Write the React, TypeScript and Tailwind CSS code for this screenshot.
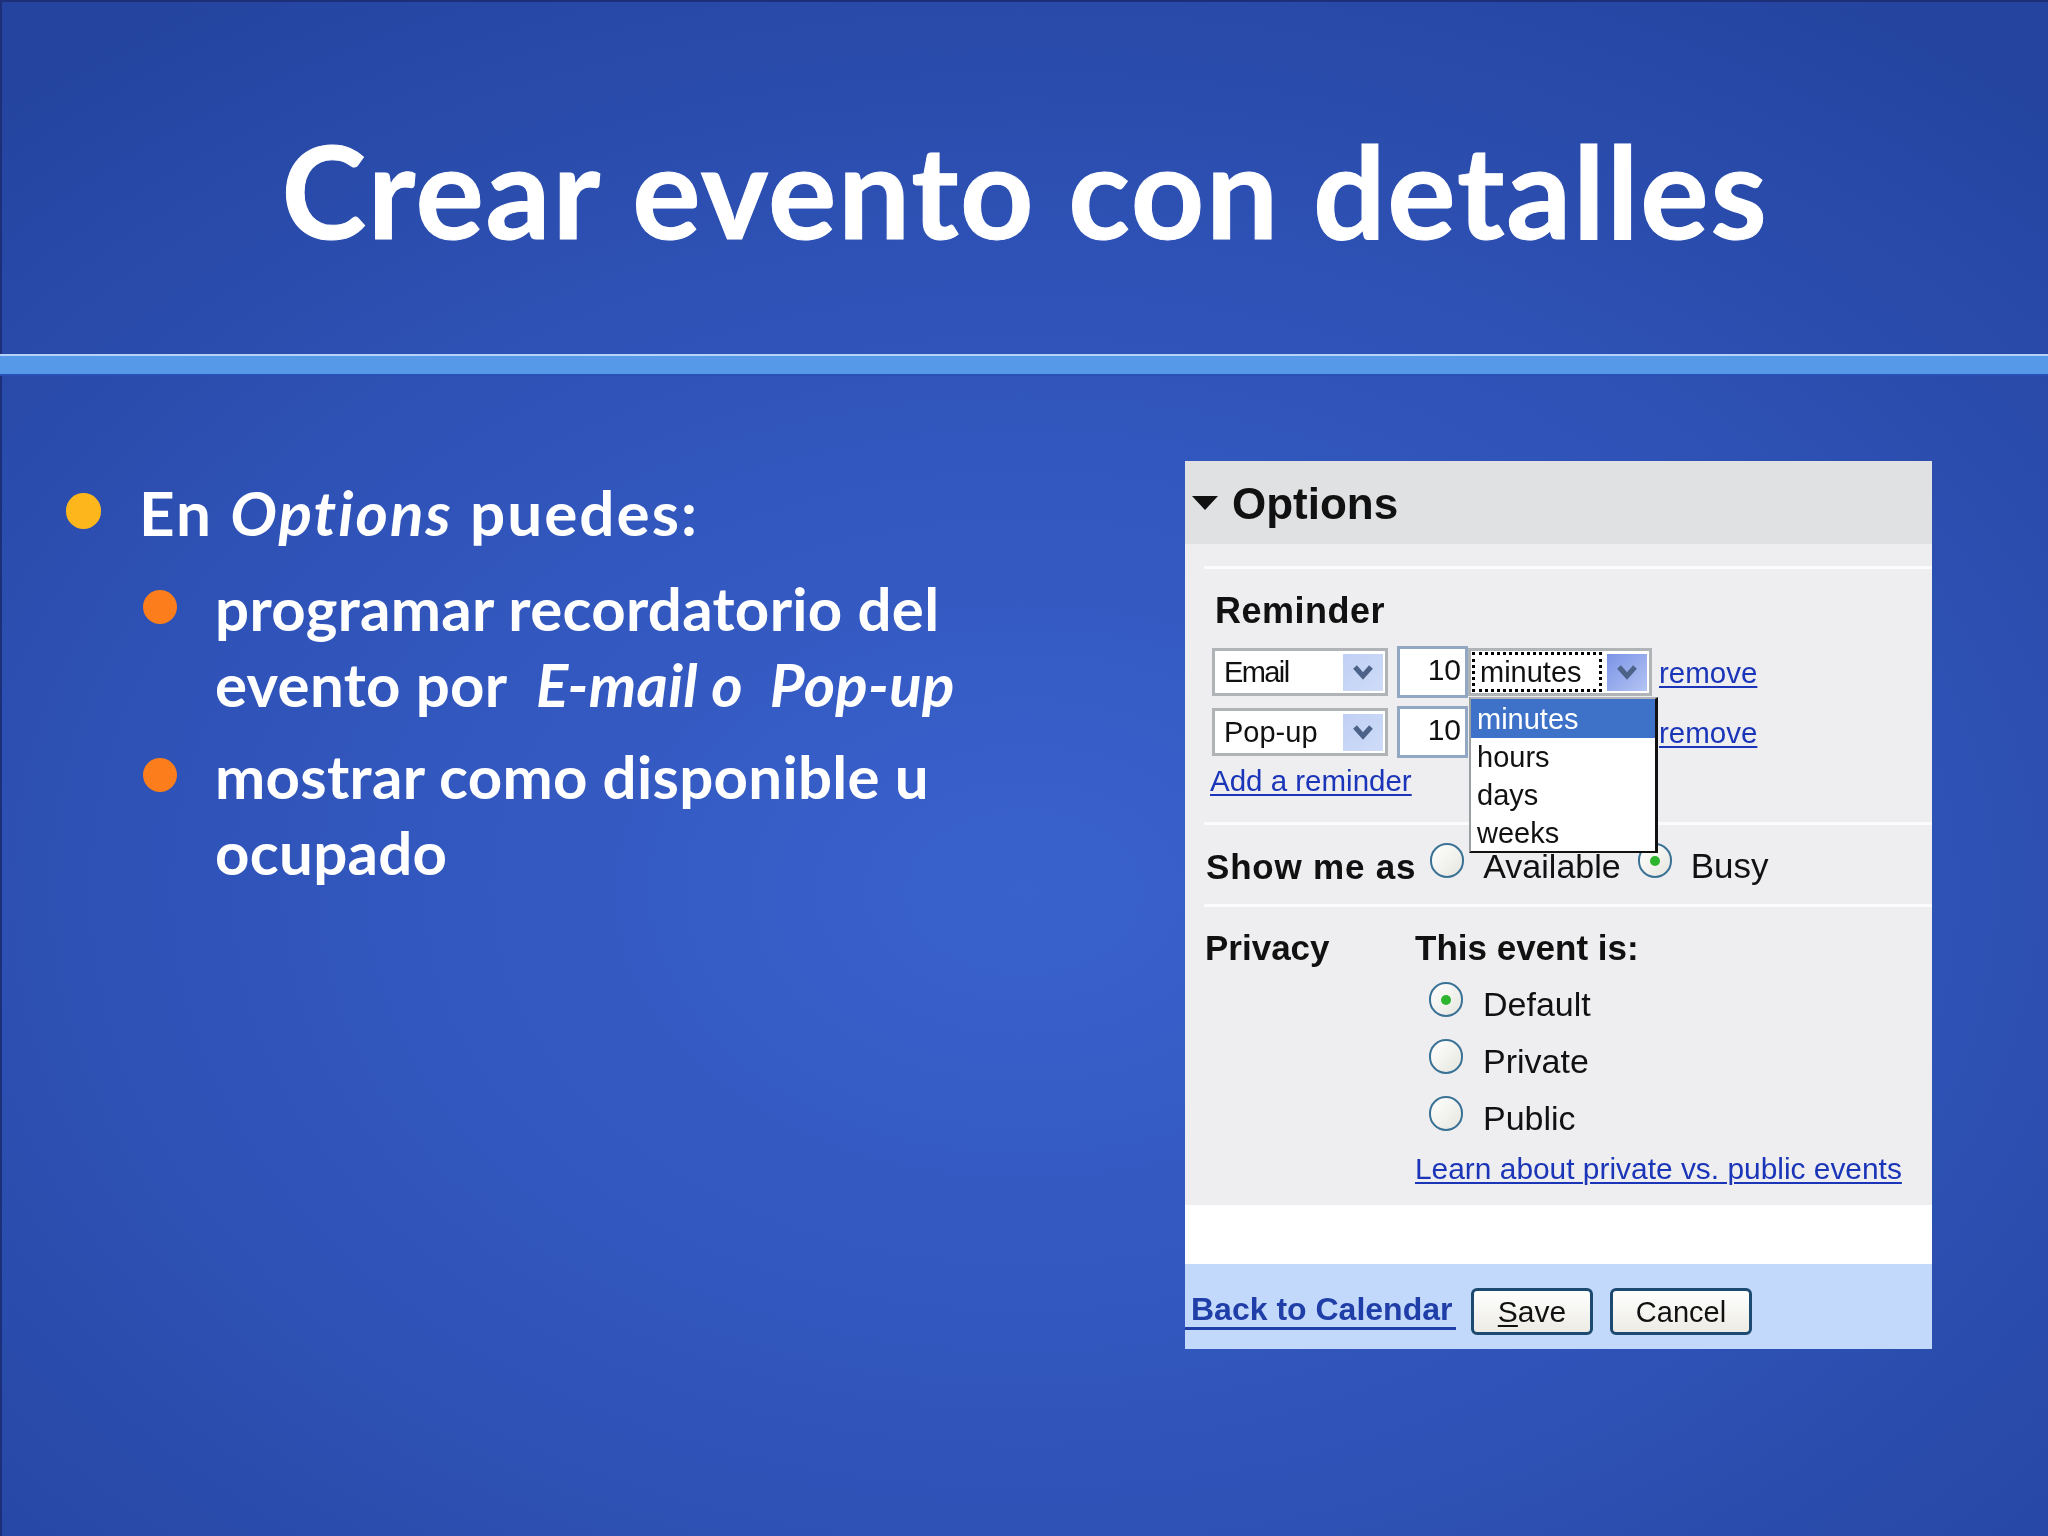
import React from 'react';

const sans = "font-['Liberation_Sans',Arial,sans-serif]";
const linkText = 'text-[#1a35b8] underline decoration-2 underline-offset-[3px]';

function Arrow({ dark }: { dark?: boolean }) {
  return (
    <span
      className={`flex h-[37px] w-[40px] shrink-0 items-center justify-center ${
        dark ? 'bg-gradient-to-br from-[#7b93e6] to-[#b4c4f3]' : 'bg-gradient-to-br from-[#c0d0f5] to-[#cfdcf8]'
      }`}
    >
      <svg width="22" height="18" viewBox="0 0 22 18">
        <polyline points="3,4 11,13 19,4" fill="none" stroke="#4d6288" strokeWidth="5" />
      </svg>
    </span>
  );
}

function ReminderRow({ kind, top }: { kind: string; top?: boolean }) {
  return (
    <div className="flex h-[52px] items-center">
      <div className="flex h-[48px] w-[176px] items-center justify-between border-[3px] border-[#b1b4b6] bg-white pr-[2px] pl-[9px]">
        <span className={kind === 'Email' ? 'pt-[2px] text-[29px] tracking-[-1.6px]' : 'pt-[2px] text-[29px]'}>{kind}</span>
        <Arrow />
      </div>
      <div className="ml-[9px] flex h-[52px] w-[71px] items-center justify-end border-[3px] border-[#92a8c2] bg-white pr-[4px] pb-[5px] text-[30px]">
        10
      </div>
      {top ? (
        <div className="flex h-[48px] w-[184px] items-center justify-between border-[3px] border-[#b1b4b6] bg-white pr-[2px] pl-[1px]">
          <span className="flex h-[40px] w-[130px] items-center border-[3px] border-dotted border-black pt-[2px] pl-[5px] text-[29px]">minutes</span>
          <Arrow dark />
        </div>
      ) : (
        <div className="w-[184px]" />
      )}
      <a className={`ml-[7px] pt-[2px] text-[29.5px] ${linkText}`}>remove</a>
    </div>
  );
}

function Radio({ on, className = '' }: { on?: boolean; className?: string }) {
  return (
    <span
      className={`flex h-[35px] w-[34px] shrink-0 items-center justify-center rounded-full border-2 border-[#3a7296] bg-gradient-to-br from-white to-[#e6e6df] ${className}`}
    >
      {on && <span className="h-[10px] w-[10px] rounded-full bg-[#2db52d]" />}
    </span>
  );
}

function PrivacyOption({ label, on }: { label: string; on?: boolean }) {
  return (
    <div className="flex h-[57px] items-start">
      <Radio on={on} className="ml-[14px]" />
      <span className="ml-[20px] pt-[2px] text-[34px] leading-[40px]">{label}</span>
    </div>
  );
}

function OptionsShot() {
  return (
    <div className={`flex h-[888px] w-[747px] flex-col bg-white text-[#111] blur-[0.7px] ${sans}`}>
      <div className="flex h-[83px] items-center bg-[#e0e1e2] pl-[7px]">
        <span className="h-0 w-0 border-x-[13px] border-t-[14px] border-x-transparent border-t-[#111]" />
        <span className="ml-[14px] pt-[3px] text-[44px] leading-[52px] font-bold">Options</span>
      </div>

      <div className="flex h-[661px] flex-col bg-[#eeeef0]">
        <div className="mt-[22px] ml-[19px] h-[3px] bg-[#fbfbfb]" />

        <div className="relative h-[253px] pl-[27px]">
          <div className="mt-[24px] ml-[3px] text-[36px] leading-[36px] font-bold tracking-[0.5px]">Reminder</div>
          <div className="mt-[17px] flex flex-col gap-[8px]">
            <ReminderRow kind="Email" top />
            <ReminderRow kind="Pop-up" />
          </div>
          <a className={`mt-[5px] -ml-[2px] block text-[29.5px] leading-[36px] ${linkText}`}>Add a reminder</a>

          <div className="absolute top-[128px] left-[284px] z-10 flex h-[156px] w-[189px] flex-col border-y-2 border-r-[3px] border-l-2 border-[#111] border-t-[#b1b4b6] border-l-[#9a9fa3] bg-white text-[29px] leading-[38px]">
            <div className="bg-[#3d72c8] pt-[1px] pl-[6px] text-white">minutes</div>
            <div className="pl-[6px]">hours</div>
            <div className="pl-[6px]">days</div>
            <div className="pl-[6px]">weeks</div>
          </div>
        </div>

        <div className="ml-[19px] h-[3px] bg-[#fbfbfb]" />

        <div className="flex h-[79px] items-start pl-[21px]">
          <span className="mt-[23px] text-[35px] leading-[38px] font-bold tracking-[0.8px]">Show me as</span>
          <Radio className="mt-[18px] ml-[14px]" />
          <span className="mt-[20px] ml-[19px] text-[34px] leading-[42px]">Available</span>
          <Radio on className="mt-[18px] ml-[17px]" />
          <span className="mt-[20px] ml-[19px] text-[35px] leading-[42px]">Busy</span>
        </div>

        <div className="ml-[19px] h-[3px] bg-[#fbfbfb]" />

        <div className="flex pl-[20px]">
          <div className="mt-[21px] w-[210px] text-[35px] leading-[40px] font-bold">Privacy</div>
          <div className="mt-[21px] flex flex-col">
            <div className="text-[35px] leading-[40px] font-bold">This event is:</div>
            <div className="mt-[14px] flex flex-col">
              <PrivacyOption label="Default" on />
              <PrivacyOption label="Private" />
              <PrivacyOption label="Public" />
            </div>
            <a className={`-mt-[2px] text-[29.9px] leading-[36px] ${linkText}`}>Learn about private vs. public events</a>
          </div>
        </div>
      </div>

      <div className="h-[59px] bg-white" />

      <div className="flex h-[85px] items-start bg-[#c3d9fb]">
        <a className="mt-[19px] w-[271px] border-b-[3px] border-[#1f3ea8] pt-[8px] pl-[6px] text-[32px] leading-[36px] font-bold whitespace-nowrap text-[#1f3ea8]">
          Back to Calendar
        </a>
        <button className="mt-[24px] ml-[15px] h-[47px] w-[122px] rounded-[6px] border-[3px] border-[#1d4a70] bg-gradient-to-b from-white to-[#ecebe4] text-[30px] leading-[38px]">
          <span className="underline decoration-2 underline-offset-[3px]">S</span>ave
        </button>
        <button className="mt-[24px] ml-[17px] h-[47px] w-[142px] rounded-[6px] border-[3px] border-[#1d4a70] bg-gradient-to-b from-white to-[#ecebe4] text-[29px] leading-[38px]">
          Cancel
        </button>
      </div>
    </div>
  );
}

function Bullet({ color, size }: { color: string; size: string }) {
  return <span className={`shrink-0 rounded-full ${color} ${size}`} />;
}

export default function App() {
  return (
    <div className="flex h-[1536px] w-[2048px] flex-col overflow-hidden bg-[radial-gradient(ellipse_75%_70%_at_50%_58%,#3a62cd_0%,#2f53b8_55%,#24449f_100%)] font-['Lato',sans-serif] text-white">
      <header className="flex h-[354px] justify-center border-t-2 border-l-2 border-[#1c2f78] pt-[108px]">
        <h1 className="text-[128px] leading-[160px] font-bold tracking-[1.8px] [-webkit-text-stroke:1px_white]">Crear evento con detalles</h1>
      </header>

      <div className="h-[2px] bg-[#b5d2f7]" />
      <div className="h-[18px] bg-[#5599e8]" />
      <div className="h-[2px] bg-[#2c4fb5]" />

      <main className="flex flex-1 border-l-2 border-[#1c2f78] pl-[64px]">
        <div className="w-[1119px] pt-[100px] font-bold">
          <div className="flex items-start">
            <Bullet color="bg-[#fdb71d]" size="mt-[17px] h-[36px] w-[35px]" />
            <p className="ml-[38px] text-[62px] leading-[72px] tracking-[2.05px]">
              En <em>Options</em> puedes:
            </p>
          </div>
          <ul className="mt-[22px] ml-[77px] flex flex-col gap-[16px] text-[60px] leading-[76px] tracking-[0.3px]">
            <li className="flex items-start">
              <Bullet color="bg-[#fb7d1c]" size="mt-[20px] h-[34px] w-[34px]" />
              <span className="ml-[38px]">
                programar recordatorio del
                <br />
                evento por&nbsp; <em>E-mail o&nbsp; Pop-up</em>
              </span>
            </li>
            <li className="flex items-start">
              <Bullet color="bg-[#fb7d1c]" size="mt-[20px] h-[34px] w-[34px]" />
              <span className="ml-[38px]">
                mostrar como disponible u
                <br />
                ocupado
              </span>
            </li>
          </ul>
        </div>
        <div className="pt-[85px]">
          <OptionsShot />
        </div>
      </main>
    </div>
  );
}
